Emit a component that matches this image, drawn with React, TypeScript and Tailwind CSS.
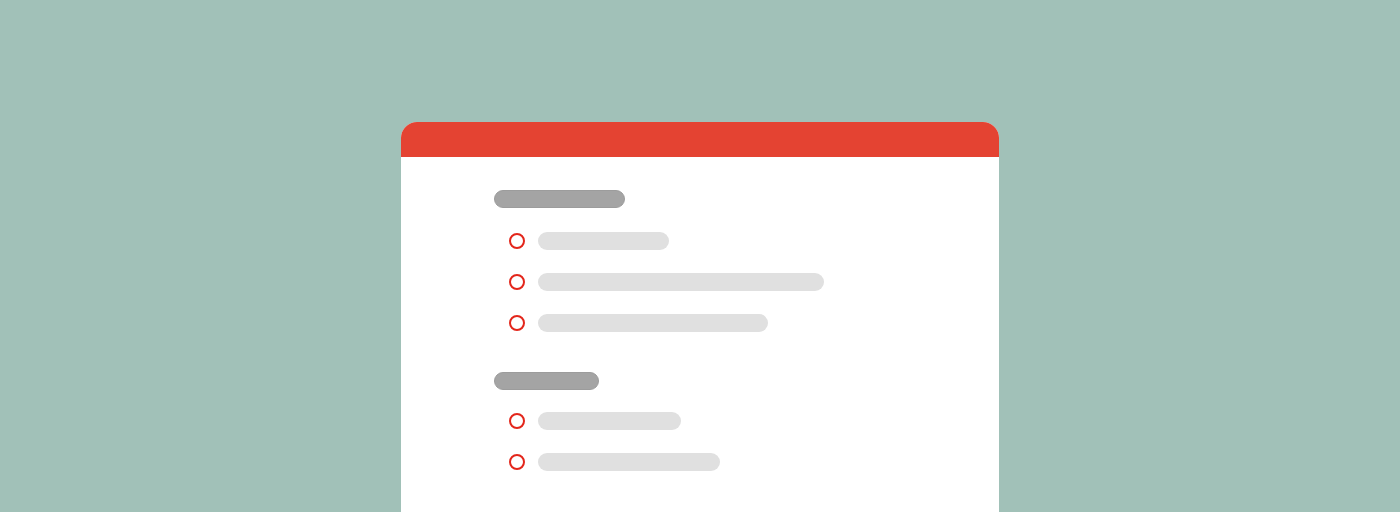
const sections = [
  { title: 131, gap: 'mt-[24px]', items: [131, 286, 230] },
  { title: 105, gap: 'mt-[22px]', items: [143, 182] },
];

function Item({ width }: { width: number }) {
  return (
    <div className="flex items-center h-[18px]">
      <div className="ml-[15px] w-4 h-4 rounded-full border-2 border-[#e3261b] shrink-0" />
      <div className="ml-[13px] h-[18px] rounded-full bg-[#e0e0e0]" style={{ width }} />
    </div>
  );
}

export default function App() {
  return (
    <div className="w-full h-[512px] bg-[#a1c1b8] overflow-hidden pt-[122px]">
      <div className="mx-auto w-[598px] h-[500px] bg-white rounded-t-[16px] overflow-hidden">
        <div className="h-[35px] bg-[#e44332]" />
        <div className="pl-[93px] pt-[33px] flex flex-col gap-[40px]">
          {sections.map((s, i) => (
            <div key={i} className="flex flex-col">
              <div className="h-[18px] rounded-full bg-[#a4a4a4] border border-[#9c9c9c]" style={{ width: s.title }} />
              <div className={`${s.gap} flex flex-col gap-[23px]`}>
                {s.items.map((w, j) => (
                  <Item key={j} width={w} />
                ))}
              </div>
            </div>
          ))}
        </div>
      </div>
    </div>
  );
}
